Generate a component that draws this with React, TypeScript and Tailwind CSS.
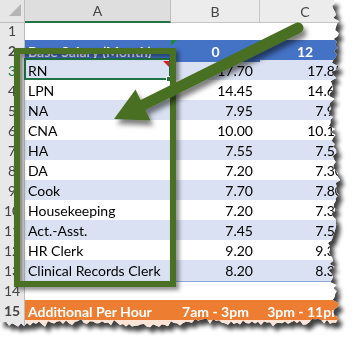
import React from "react";

type Row = { n: number; a: string; b: string; c: string };

const rows: Row[] = [
  { n: 3, a: "RN", b: "17.70", c: "17.85" },
  { n: 4, a: "LPN", b: "14.45", c: "14.60" },
  { n: 5, a: "NA", b: "7.95", c: "7.95" },
  { n: 6, a: "CNA", b: "10.00", c: "10.15" },
  { n: 7, a: "HA", b: "7.55", c: "7.55" },
  { n: 8, a: "DA", b: "7.20", c: "7.30" },
  { n: 9, a: "Cook", b: "7.70", c: "7.80" },
  { n: 10, a: "Housekeeping", b: "7.20", c: "7.30" },
  { n: 11, a: "Act.-Asst.", b: "7.45", c: "7.55" },
  { n: 12, a: "HR Clerk", b: "9.20", c: "9.30" },
  { n: 13, a: "Clinical Records Clerk", b: "8.20", c: "8.30" },
];

// torn paper edge, deterministic so the picture is stable
function tornEdge() {
  let s = 7;
  const rnd = () => {
    s = (s * 9301 + 49297) % 233280;
    return s / 233280;
  };
  const pts: string[] = ["0px 0px"];
  for (let y = 0; y <= 320; y += 3) {
    const x = 334 + Math.sin(y / 23) * 3 + (rnd() - 0.5) * 7;
    pts.push(`${x.toFixed(1)}px ${y}px`);
  }
  for (let x = 336; x >= 0; x -= 3) {
    const y = 323 + Math.sin(x / 19) * 1.5 + (rnd() - 0.5) * 6;
    pts.push(`${x}px ${y.toFixed(1)}px`);
  }
  return `polygon(${pts.join(",")})`;
}

const RowHead = ({ n, green }: { n: number; green?: boolean }) => (
  <div
    className={`flex items-center justify-center border-r border-b border-r-[#bdbdbd] border-b-[#d4d4d4] bg-[#e8e8e8] ${
      green ? "text-[#217346]" : "text-[#444]"
    }`}
  >
    {n}
  </div>
);

export default function App() {
  return (
    <div className="w-[361px] h-[348px] bg-white overflow-hidden font-['Lato','Liberation_Sans',sans-serif] text-[14px] text-black">
      <div className="drop-shadow-[4px_5px_2px_rgba(0,0,0,0.75)]">
        <div className="relative w-[350px] h-[340px] bg-white" style={{ clipPath: tornEdge() }}>
          {/* column headers */}
          <div className="grid grid-cols-[25px_146px_89px_90px] h-5 text-[#444]">
            <div className="relative bg-[#e6e6e6] border-r border-b border-[#bdbdbd]">
              <svg className="absolute left-0 top-0" width="25" height="20">
                <polygon points="21,4 21,16 9,16" fill="#b5b5b5" />
              </svg>
            </div>
            <div className="flex items-center justify-center bg-[#dedede] border-r border-[#bdbdbd] border-b-2 border-b-[#217346]">
              A
            </div>
            <div className="flex items-center justify-center bg-[#ececec] border-r border-b border-[#c6c6c6]">
              B
            </div>
            <div className="flex items-center justify-center bg-[#ececec] border-b border-[#c6c6c6]">
              C
            </div>
          </div>

          {/* row 1 */}
          <div className="grid grid-cols-[25px_146px_89px_90px] h-5">
            <RowHead n={1} />
            <div />
            <div />
            <div />
          </div>

          {/* row 2: table header */}
          <div className="grid grid-cols-[25px_146px_89px_90px] h-5 font-bold text-white">
            <RowHead n={2} />
            <div className="flex items-center pl-[3px] bg-[#4472c4]">Base Salary (Month)</div>
            <div className="relative flex items-center justify-center bg-[#4472c4]">
              <svg className="absolute left-0 top-0" width="7" height="7">
                <polygon points="0,0 6,0 0,6" fill="#1e8a3c" />
              </svg>
              0
            </div>
            <div className="flex items-center justify-center bg-[#4472c4]">12</div>
          </div>

          {rows.map((r) => {
            const bg = r.n % 2 === 1 ? "bg-[#d9e1f2]" : "bg-white";
            return (
              <div key={r.n} className="grid grid-cols-[25px_146px_89px_90px] h-5">
                <RowHead n={r.n} green={r.n === 3} />
                <div className={`relative flex items-center pl-[3px] border-b border-[#8eaadb] ${bg}`}>
                  {r.a}
                  {r.n === 3 && (
                    <svg className="absolute right-[2px] top-[1px]" width="6" height="6">
                      <polygon points="0,0 6,0 6,6" fill="#e02020" />
                    </svg>
                  )}
                </div>
                <div className={`flex items-center justify-end pr-[7px] border-b border-[#8eaadb] ${bg}`}>{r.b}</div>
                <div className={`flex items-center justify-end pr-[7px] border-b border-[#8eaadb] ${bg}`}>{r.c}</div>
              </div>
            );
          })}

          {/* row 14 */}
          <div className="grid grid-cols-[25px_146px_89px_90px] h-5">
            <RowHead n={14} />
            <div />
            <div />
            <div />
          </div>

          {/* row 15 */}
          <div className="grid grid-cols-[25px_146px_89px_90px] h-5 font-bold text-white">
            <RowHead n={15} />
            <div className="flex items-center pl-[3px] bg-[#ed7d31]">Additional Per Hour</div>
            <div className="flex items-center justify-center bg-[#ed7d31]">7am - 3pm</div>
            <div className="flex items-center justify-center bg-[#ed7d31]">3pm - 11pm</div>
          </div>

          {/* row 16 */}
          <div className="grid grid-cols-[25px_146px_89px_90px] h-5">
            <RowHead n={16} />
            <div className="bg-[#fce4d6]" />
            <div className="bg-[#fce4d6]" />
            <div className="bg-[#fce4d6]" />
          </div>

          {/* active cell A3 */}
          <div className="absolute left-[24px] top-[58px] w-[147px] h-[22px] border-2 border-[#217346]" />
          <div className="absolute left-[166px] top-[76px] w-[6px] h-[6px] bg-[#217346] border border-white" />

          {/* callout box */}
          <div className="absolute left-[14px] top-[48px] w-[162px] h-[239px] border-[6px] border-[#4a7024] drop-shadow-[3px_3px_2px_rgba(0,0,0,0.45)]" />

          {/* arrow */}
          <svg className="absolute left-0 top-0" width="350" height="340">
            <defs>
              <filter id="sh" x="-20%" y="-20%" width="140%" height="160%">
                <feDropShadow dx="3" dy="5" stdDeviation="2.5" floodColor="#000" floodOpacity="0.5" />
              </filter>
            </defs>
            <g filter="url(#sh)" fill="#4a7024">
              <line x1="298" y1="28" x2="141" y2="106" stroke="#4a7024" strokeWidth="11" strokeLinecap="round" />
              <polygon points="114,119 135.5,89.5 150.5,120.5" />
            </g>
          </svg>
        </div>
      </div>
    </div>
  );
}
